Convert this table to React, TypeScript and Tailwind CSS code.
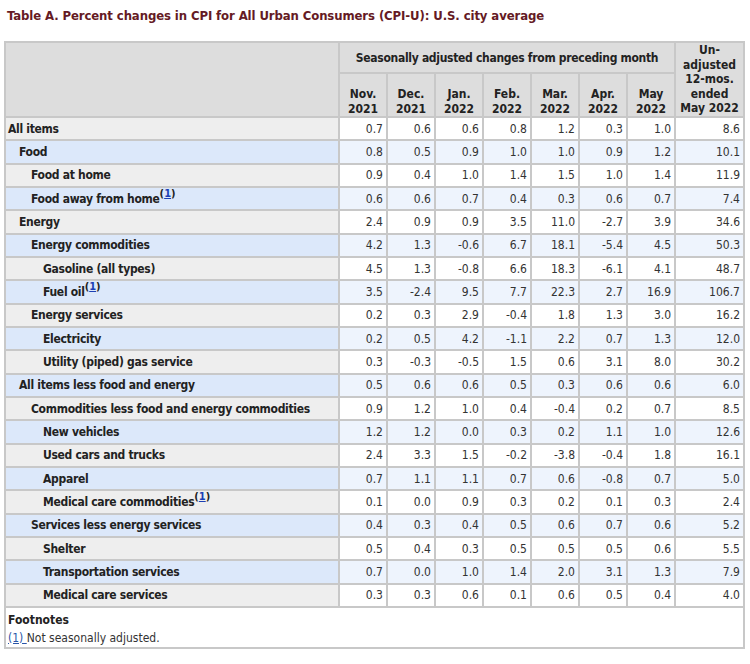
import React from 'react';

type Row = { label: string; level: number; fn?: boolean; vals: string[] };

const ROWS: Row[] = [
  { label: 'All items', level: 0, vals: ['0.7', '0.6', '0.6', '0.8', '1.2', '0.3', '1.0', '8.6'] },
  { label: 'Food', level: 1, vals: ['0.8', '0.5', '0.9', '1.0', '1.0', '0.9', '1.2', '10.1'] },
  { label: 'Food at home', level: 2, vals: ['0.9', '0.4', '1.0', '1.4', '1.5', '1.0', '1.4', '11.9'] },
  { label: 'Food away from home', level: 2, fn: true, vals: ['0.6', '0.6', '0.7', '0.4', '0.3', '0.6', '0.7', '7.4'] },
  { label: 'Energy', level: 1, vals: ['2.4', '0.9', '0.9', '3.5', '11.0', '-2.7', '3.9', '34.6'] },
  { label: 'Energy commodities', level: 2, vals: ['4.2', '1.3', '-0.6', '6.7', '18.1', '-5.4', '4.5', '50.3'] },
  { label: 'Gasoline (all types)', level: 3, vals: ['4.5', '1.3', '-0.8', '6.6', '18.3', '-6.1', '4.1', '48.7'] },
  { label: 'Fuel oil', level: 3, fn: true, vals: ['3.5', '-2.4', '9.5', '7.7', '22.3', '2.7', '16.9', '106.7'] },
  { label: 'Energy services', level: 2, vals: ['0.2', '0.3', '2.9', '-0.4', '1.8', '1.3', '3.0', '16.2'] },
  { label: 'Electricity', level: 3, vals: ['0.2', '0.5', '4.2', '-1.1', '2.2', '0.7', '1.3', '12.0'] },
  { label: 'Utility (piped) gas service', level: 3, vals: ['0.3', '-0.3', '-0.5', '1.5', '0.6', '3.1', '8.0', '30.2'] },
  { label: 'All items less food and energy', level: 1, vals: ['0.5', '0.6', '0.6', '0.5', '0.3', '0.6', '0.6', '6.0'] },
  { label: 'Commodities less food and energy commodities', level: 2, vals: ['0.9', '1.2', '1.0', '0.4', '-0.4', '0.2', '0.7', '8.5'] },
  { label: 'New vehicles', level: 3, vals: ['1.2', '1.2', '0.0', '0.3', '0.2', '1.1', '1.0', '12.6'] },
  { label: 'Used cars and trucks', level: 3, vals: ['2.4', '3.3', '1.5', '-0.2', '-3.8', '-0.4', '1.8', '16.1'] },
  { label: 'Apparel', level: 3, vals: ['0.7', '1.1', '1.1', '0.7', '0.6', '-0.8', '0.7', '5.0'] },
  { label: 'Medical care commodities', level: 3, fn: true, vals: ['0.1', '0.0', '0.9', '0.3', '0.2', '0.1', '0.3', '2.4'] },
  { label: 'Services less energy services', level: 2, vals: ['0.4', '0.3', '0.4', '0.5', '0.6', '0.7', '0.6', '5.2'] },
  { label: 'Shelter', level: 3, vals: ['0.5', '0.4', '0.3', '0.5', '0.5', '0.5', '0.6', '5.5'] },
  { label: 'Transportation services', level: 3, vals: ['0.7', '0.0', '1.0', '1.4', '2.0', '3.1', '1.3', '7.9'] },
  { label: 'Medical care services', level: 3, vals: ['0.3', '0.3', '0.6', '0.1', '0.6', '0.5', '0.4', '4.0'] },
];

const MONTHS = [
  ['Nov.', '2021'],
  ['Dec.', '2021'],
  ['Jan.', '2022'],
  ['Feb.', '2022'],
  ['Mar.', '2022'],
  ['Apr.', '2022'],
  ['May', '2022'],
];

const INDENT = ['pl-[2px]', 'pl-[13px]', 'pl-[25px]', 'pl-[37px]'];

const App: React.FC = () => {
  return (
    <div className="w-[750px] h-[664px] bg-white text-[#333] font-['DejaVu_Sans_Condensed','DejaVu_Sans',sans-serif]">
      <h1 className="pl-[7px] pt-[6px] h-[41px] text-[13px] font-bold tracking-[-0.1px] text-[#651a24]">
        Table A. Percent changes in CPI for All Urban Consumers (CPI-U): U.S. city average
      </h1>

      <div className="ml-[4px] w-[741px] border-2 border-[#c8c8c8]">
        <table className="w-full table-fixed border-collapse text-[12px]">
          <colgroup>
            <col className="w-[333px]" />
            {MONTHS.map((m) => (
              <col key={m[0]} className="w-[48px]" />
            ))}
            <col />
          </colgroup>
          <thead className="bg-[#dddddd] font-bold text-[#222]">
            <tr className="h-[30px]">
              <th rowSpan={2} className="border-b-2 border-r-2 border-[#c8c8c8]" />
              <th
                colSpan={7}
                className="border-b-2 border-r-2 border-[#c8c8c8] text-center font-bold tracking-[-0.3px]"
              >
                Seasonally adjusted changes from preceding month
              </th>
              <th rowSpan={2} className="border-b-2 border-[#c8c8c8] text-center font-bold leading-[14.5px]">
                Un-
                <br />
                adjusted
                <br />
                12-mos.
                <br />
                ended
                <br />
                May 2022
              </th>
            </tr>
            <tr className="h-[44px]">
              {MONTHS.map((m) => (
                <th
                  key={m[0]}
                  className="border-b-2 border-r-2 border-[#c8c8c8] align-bottom pb-0 text-center font-bold leading-[14.5px]"
                >
                  {m[0]}
                  <br />
                  {m[1]}
                </th>
              ))}
            </tr>
          </thead>
          <tbody>
            {ROWS.map((r, i) => {
              const blue = i % 2 === 1;
              return (
                <tr key={r.label} className="h-[23.33px]">
                  <th
                    className={`${INDENT[r.level]} border-b-2 border-r-2 border-[#c8c8c8] text-left font-bold tracking-[-0.3px] text-[#222] whitespace-nowrap ${
                      blue ? 'bg-[#dce8fa]' : 'bg-[#eeeeee]'
                    }`}
                  >
                    {r.label}
                    {r.fn && (
                      <sup className="text-[11px] font-bold tracking-normal">
                        (<span className="text-[#1b3fb5] underline">1</span>)
                      </sup>
                    )}
                  </th>
                  {r.vals.map((v, j) => (
                    <td
                      key={j}
                      className={`border-b-2 border-[#c8c8c8] pr-[3px] text-right ${j < 7 ? 'border-r-2' : ''} ${
                        blue ? 'bg-[#eef4fd]' : 'bg-white'
                      }`}
                    >
                      {v}
                    </td>
                  ))}
                </tr>
              );
            })}
          </tbody>
        </table>
        <div className="h-[39px] px-[2px] pt-[3px] text-[12px] leading-[18px]">
          <div className="font-bold text-[#222]">Footnotes</div>
          <div>
            <span className="text-[#2a56a8] underline">(1) </span>Not seasonally adjusted.
          </div>
        </div>
      </div>
    </div>
  );
};

export default App;
